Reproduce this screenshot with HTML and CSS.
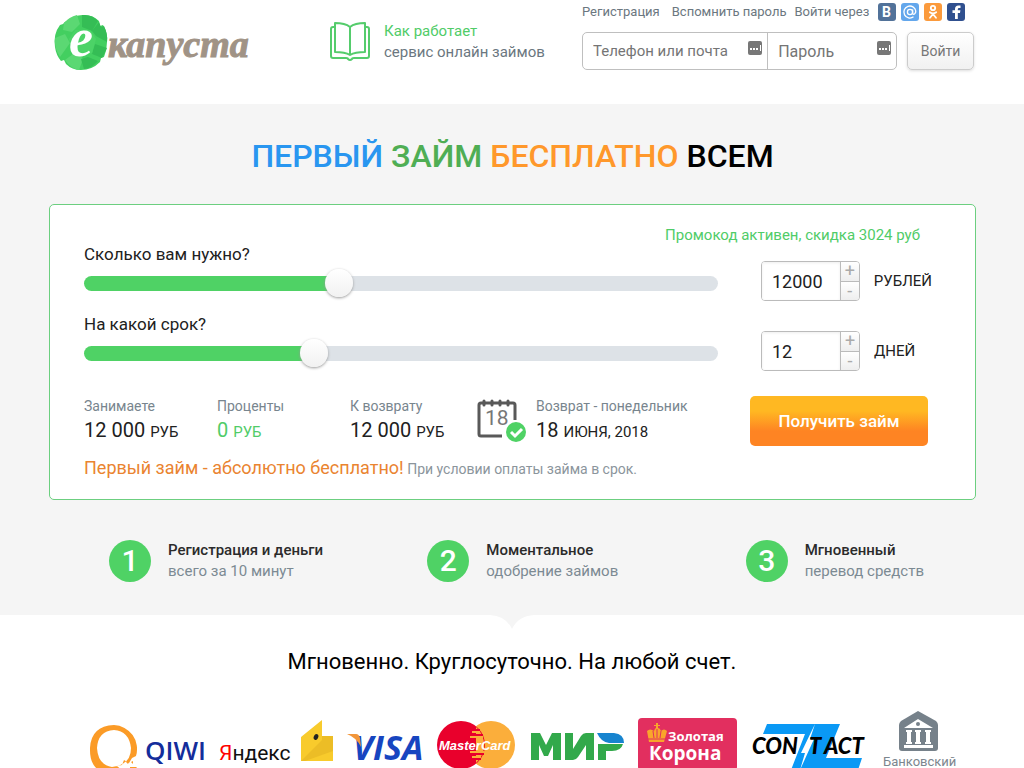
FILE: index.html
```html
<!DOCTYPE html>
<html lang="ru">
<head>
  <meta charset="UTF-8">
  <meta name="viewport" content="width=device-width, initial-scale=1.0">
  <title>еКапуста - первый займ бесплатно</title>
  <link rel="stylesheet" href="styles.css">
</head>
<body>

<header class="header">
  <a class="logo" href="#" aria-label="еКапуста">
    <svg width="200" height="62" viewBox="52 10 200 62">
      <path fill="#43cf60" d="M63 24q2-3 4-3 8-7 18-6 8 0 14 6l1 5 3-1q5 8 4 17 0 8-3 15l-3 1-1 4q-8 8-19 8-9 0-15-6l-2-4-3 1q-5-6-6-14-2-13 5-22z"/>
      <path fill="#5bd873" d="M64 23q5-6 13-8l3 9-8 8-9-2zM55 38l10-4 5 9-10 14q-6-9-5-19zM65 60l12-9 6 8-4 11q-9-2-14-10z"/>
      <path fill="#35bd55" d="M82 15q10-1 16 6l-6 10-10-4zM99 22l2 5 3-1q4 8 3 16l-11-6-4-5zM95 44l12 4-5 10-10-4zM88 57l10 4q-6 7-14 8l-3-10z"/>
      <path fill="#4cd367" d="M75 30l15 0 6 9-4 14-12 4-9-7-2-11z"/>
      <text class="logo-letter" x="69" y="56">е</text>
      <text class="logo-word" x="108" y="57">капуста</text>
    </svg>
  </a>

  <a class="how" href="#">
    <svg width="40" height="40" viewBox="0 0 40 40" fill="none" stroke="#55cc6c" stroke-width="2" stroke-linejoin="round">
      <path d="M5 5H3Q1 5 1 7V34Q1 36 3 36H16Q18 36 18 37Q20 39 22 37Q22 36 24 36H37Q39 36 39 34V7Q39 5 37 5H35"/>
      <path d="M5 1Q15 1 20 5Q25 1 35 1V30Q25 30 20 33Q15 30 5 30ZM20 5V33"/>
    </svg>
    <span class="how-text"><span class="green">Как работает</span><br>сервис онлайн займов</span>
  </a>

  <form class="login">
    <div class="login-links">
      <a class="link-reg" href="#">Регистрация</a>
      <a class="link-pass" href="#">Вспомнить пароль</a>
      <span class="via">Войти через</span>
      <div class="social">
        <a class="vk" href="#" aria-label="ВКонтакте"><svg width="18" height="18" viewBox="0 0 18 18"><text class="soc-letter" x="4" y="14">B</text></svg></a>
        <a class="mail" href="#" aria-label="Mail.ru"><svg width="18" height="18" viewBox="0 0 18 18" fill="none" stroke="#fff" stroke-width="1.3"><circle cx="9" cy="9" r="2.6"/><path d="M11.6 6.4V10Q12 12 13.5 11Q15 9.500 14.800 8A6 6 0 1 0 12.500 13.800"/></svg></a>
        <a class="ok" href="#" aria-label="Одноклассники"><svg width="18" height="18" viewBox="0 0 18 18" fill="none" stroke="#fff" stroke-width="1.8" stroke-linecap="round"><circle cx="9" cy="5" r="2.200"/><path d="M5.800 9.300Q9 11.500 12.200 9.300M9 11L6 14.800M9 11L12 14.800"/></svg></a>
        <a class="fb" href="#" aria-label="Facebook"><svg width="18" height="18" viewBox="0 0 18 18"><path fill="#fff" d="M8 16V10H5.500V7.200H8V6Q8 2.500 11.500 2.500H13.500V5H12Q10.800 5 10.800 6.200V7.200H13.400L13 10H10.800V16Z"/></svg></a>
      </div>
    </div>
    <div class="login-row">
      <div class="fields">
        <label class="field field-phone">
          <input type="text" placeholder="Телефон или почта" aria-label="Телефон или почта">
          <svg width="14" height="14" viewBox="0 0 14 14"><rect width="14" height="14" rx="2" fill="#777"/><path fill="#fff" d="M2 7h2v2H2zM5 7h2v2H5zM8 7h2v2H8zM12 4h1v6h-1z"/></svg>
        </label>
        <label class="field field-pass">
          <input type="password" placeholder="Пароль" aria-label="Пароль">
          <svg width="14" height="14" viewBox="0 0 14 14"><rect width="14" height="14" rx="2" fill="#777"/><path fill="#fff" d="M2 7h2v2H2zM5 7h2v2H5zM8 7h2v2H8zM12 4h1v6h-1z"/></svg>
        </label>
      </div>
      <button class="btn-login" type="button">Войти</button>
    </div>
  </form>
</header>

<main>
  <section class="promo">
    <h1><span class="blue">ПЕРВЫЙ</span> <span class="dark-green">ЗАЙМ</span> <span class="orange">БЕСПЛАТНО</span> ВСЕМ</h1>

    <form class="calc">
      <div class="promocode">Промокод активен, скидка 3024 руб</div>

      <div class="row">
        <div class="range">
          <label for="sum">Сколько вам нужно?</label>
          <input type="range" id="sum" min="100" max="30000" step="100" value="12000" style="--fill: 40%">
        </div>
        <div class="amount">
          <div class="stepper">
            <input type="text" id="sum-value" value="12000" aria-label="Сумма, рублей">
            <div class="step-btns">
              <button type="button" data-for="sum" data-step="100">+</button>
              <button type="button" data-for="sum" data-step="-100">-</button>
            </div>
          </div>
          <span>РУБЛЕЙ</span>
        </div>
      </div>

      <div class="row">
        <div class="range">
          <label for="days">На какой срок?</label>
          <input type="range" id="days" min="7" max="21" value="12" style="--fill: 36%">
        </div>
        <div class="amount">
          <div class="stepper">
            <input type="text" id="days-value" value="12" aria-label="Срок, дней">
            <div class="step-btns">
              <button type="button" data-for="days" data-step="1">+</button>
              <button type="button" data-for="days" data-step="-1">-</button>
            </div>
          </div>
          <span>ДНЕЙ</span>
        </div>
      </div>

      <div class="summary">
        <div class="sum-item"><span>Занимаете</span><p>12 000 <small>РУБ</small></p></div>
        <div class="sum-item"><span>Проценты</span><p class="green">0 <small>РУБ</small></p></div>
        <div class="sum-item"><span>К возврату</span><p>12 000 <small>РУБ</small></p></div>
        <svg class="calendar" width="50" height="46" viewBox="0 0 50 46">
          <path fill="none" stroke="#595959" stroke-width="3" stroke-linejoin="round" d="M25 38H4Q2 38 2 36V7Q2 5 4 5H36Q38 5 38 7V22"/>
          <path stroke="#595959" stroke-width="3" stroke-linecap="round" d="M7 3V7M15 3V7M23 3V7M31 3V7"/>
          <text class="cal-day" x="8" y="27">18</text>
          <circle cx="39" cy="34" r="10" fill="#4fd265"/>
          <path fill="none" stroke="#fff" stroke-width="3" d="M34 34l4 4 7-7"/>
        </svg>
        <div class="sum-item"><span>Возврат - понедельник</span><p>18 <small>ИЮНЯ, 2018</small></p></div>
        <button class="btn-get" type="button">Получить займ</button>
      </div>

      <div class="note"><span>Первый займ - абсолютно бесплатно!</span> При условии оплаты займа в срок.</div>
    </form>

    <div class="steps">
      <div class="step"><div class="num">1</div><p><b>Регистрация и деньги</b><br>всего за 10 минут</p></div>
      <div class="step"><div class="num">2</div><p><b>Моментальное</b><br>одобрение займов</p></div>
      <div class="step"><div class="num">3</div><p><b>Мгновенный</b><br>перевод средств</p></div>
    </div>
  </section>

  <section class="pay">
    <svg class="notch" width="44" height="14" viewBox="0 0 44 14"><path fill="#f5f5f5" d="M0 0H44Q28 1 22 14Q16 1 0 0Z"/></svg>
    <h2>Мгновенно. Круглосуточно. На любой счет.</h2>

    <div class="brands">
      <svg width="116" height="66" viewBox="90 708 116 66" role="img" aria-label="QIWI">
        <path fill="#fb9b27" fill-rule="evenodd" d="M114 725a24 24 0 0 1 22 31l-4 2-3 5-5-3-2 5-5 1 7 6q-35 7-34-24 1-22 24-23zM114 730q-16 1-17 18 1 17 15 19 19-2 19-19-2-17-17-18z"/>
        <path fill="#fb9b27" d="M126 762l2-2 1 2-1 2zM131 762l2-1v3zM130 767h7q-2 4-7 2z"/>
        <text class="qiwi" x="145" y="760">QIWI</text>
      </svg>
      <svg width="113" height="66" viewBox="220 708 113 66" role="img" aria-label="Яндекс">
        <text class="yandex" x="219" y="760"><tspan fill="#f00">Я</tspan>ндекс</text>
        <path fill="#f8cb2c" d="M301 737L322 720V736H333V761H301Z"/>
        <path fill="#dfaf20" d="M322 736H326V747L310 755L322 742ZM326 736L333 736V751L305 761H301Z" opacity=".5"/>
        <ellipse cx="316" cy="737" rx="2.200" ry="3" fill="#222" transform="rotate(25 316 737)"/>
      </svg>
      <svg width="74" height="66" viewBox="350 708 74 66" role="img" aria-label="VISA">
        <text class="visa" x="355" y="760">VISA</text>
        <path fill="#f2963a" d="M349 734H358Q361 734 362 738L363 747Q359 738 349 734Z"/>
      </svg>
      <svg width="80" height="66" viewBox="438 708 80 66" role="img" aria-label="MasterCard">
        <circle cx="493" cy="745" r="24" fill="#fbae3b"/>
        <circle cx="463" cy="745" r="24" fill="#e9002c"/>
        <path fill="#fbae3b" d="M478 727a24 24 0 0 1 0 36z"/>
        <path stroke="#e9002c" stroke-width="2" d="M474 730H482M474 735H485M474 754H486M474 759H483"/>
        <path stroke="#fbae3b" stroke-width="2" d="M474 732H482M472 737H485M472 752H486M474 757H483"/>
        <text class="mc" x="441" y="750">MasterCard</text>
      </svg>
      <svg width="93" height="66" viewBox="530 708 93 66" role="img" aria-label="МИР">
        <g fill="#32a94b">
          <path d="M530 760V733H539L545 745L551 733H560V760H552V745L547 756H543L538 745V760Z"/>
          <path d="M564 733H572V749L580 736Q582 733 585 733H593V760H585V745L577 757Q575 760 572 760H564Z"/>
          <path d="M597 744H622Q620 751 611 751H605V760H597Z"/>
        </g>
        <path fill="#1784cf" d="M596 733H613Q623 734 623 743H608Q600 742 596 733Z"/>
      </svg>
      <svg width="99" height="66" viewBox="635 708 99 66" role="img" aria-label="Золотая Корона">
        <rect x="635" y="718" width="99" height="53" rx="4" fill="#e22f5f"/>
        <path fill="#f9a52b" d="M646 742L644 731Q647 728 651 731Q652 728 653 728V726H651V725H653V723H655V725H657V726H655V728Q657 728 658 731Q661 728 664 731L661 742Z"/>
        <path stroke="#e22f5f" fill="none" d="M650 731L651 738M654 729V738M658 731L657 738M645 739H662"/>
        <text class="zk-1" x="665" y="741">Золотая</text>
        <text class="zk-2" x="646" y="760">Корона</text>
      </svg>
      <svg width="118" height="66" viewBox="750 708 118 66" role="img" aria-label="CONTACT">
        <path fill="#0a99f5" d="M765 724H838L824 758H860L856 770H789L803 734H761Z"/>
        <path fill="#fff" d="M813 724L799 753L803 753L798 770L812 739L808 739Z"/>
        <text class="contact" x="750" y="754">CON</text>
        <text class="contact" x="807" y="754">T</text>
        <text class="contact" x="822" y="754">ACT</text>
      </svg>
      <svg width="70" height="66" viewBox="884 708 70 66" role="img" aria-label="Банковский">
        <path fill="#76818a" d="M918 711L936 721Q938 723 938 725V748Q938 751 935 751H902Q899 751 899 748V725Q899 723 901 721Z"/>
        <path fill="#fff" d="M918 719L933 728H904ZM906 730H912V732H911V742H912V744H906V742H907V732H906ZM915 730H921V732H920V742H921V744H915V742H916V732H915ZM925 730H931V732H930V742H931V744H925V742H926V732H925ZM904 745H933V748H904Z"/>
        <circle cx="918" cy="724" r="2" fill="#76818a"/>
        <text class="bank" x="883" y="766">Банковский</text>
      </svg>
    </div>
  </section>
</main>

<script>
  document.querySelectorAll('.range input').forEach(range => {
    const value = document.getElementById(range.id + '-value');

    range.addEventListener('input', () => {
      value.value = range.value;
      const part = (range.value - range.min) / (range.max - range.min);
      range.style.setProperty('--fill', Math.round(part * 100) + '%');
    });

    value.addEventListener('change', () => {
      range.value = value.value;
      range.dispatchEvent(new Event('input'));
    });
  });

  document.querySelectorAll('.step-btns button').forEach(btn => {
    btn.addEventListener('click', () => {
      const range = document.getElementById(btn.dataset.for);
      range.value = Number(range.value) + Number(btn.dataset.step);
      range.dispatchEvent(new Event('input'));
    });
  });
</script>
</body>
</html>
```
FILE: styles.css
```css
* { box-sizing: border-box; }
body { margin: 0; background: #fff; color: #212121; font-family: Roboto, "Liberation Sans", sans-serif; font-size: 15px; line-height: 20px; }
h1, h2, p { margin: 0; }
a { color: inherit; text-decoration: none; }
svg { display: block; flex: none; }
input, button { font-family: inherit; margin: 0; }

.green { color: #50cc68; }
.blue { color: #2996f0; }
.dark-green { color: #4fae54; }
.orange { color: #ff982b; }

/* header */
.header { display: grid; grid-template-columns: 278px 252px 1fr; max-width: 1024px; margin: 0 auto; padding: 0 50px 32px 52px; }
.logo { padding-top: 10px; }
.logo-letter { font: italic bold 54px "Liberation Serif", serif; fill: #fff; }
.logo-word { font: italic bold 38px "Liberation Serif", serif; fill: #a09386; stroke: #a09386; }
.how { display: flex; gap: 14px; padding-top: 21px; color: #6b7780; }
.how svg { margin-top: 1px; }
.how-text { line-height: 21px; }
.login-links { display: flex; align-items: center; height: 24px; font-size: 13px; color: #6b7780; white-space: nowrap; }
.link-reg { margin-right: 12px; }
.link-pass { margin-right: 8px; }
.via { margin-right: 9px; }
.social { display: flex; gap: 5px; }
.social a { border-radius: 3px; }
.vk { background: #527299; }
.mail { background: #63a7ec; }
.ok { background: #fb9a3c; }
.fb { background: #30508f; }
.soc-letter { font: bold 14px Roboto, sans-serif; fill: #fff; }
.login-row { display: flex; gap: 10px; margin-top: 8px; }
.fields { display: flex; flex: 1; height: 38px; border: 1px solid #bfbfbf; border-radius: 5px; }
.field { display: flex; padding: 8px 5px 0 10px; }
.field input { flex: 1; width: 0; height: 20px; padding: 0; border: 0; outline: 0; background: none; font-size: 15px; color: #333; }
.field-pass input { font-size: 16px; }
.field input::placeholder { color: #757575; opacity: 1; }
.field-phone { flex: 3; border-right: 1px solid #bfbfbf; }
.field-pass { flex: 2; }
.btn-login { width: 67px; border: 1px solid #ccc; border-radius: 5px; background: linear-gradient(#fff, #f1f1f1); box-shadow: 0 1px 3px #ddd; color: #777; font-size: 14px; }

/* calculator */
.promo { padding: 32px 48px 33px 49px; background: #f5f5f5; }
h1 { color: #000; font-size: 32px; line-height: 40px; font-weight: 500; text-align: center; }
.calc { max-width: 1100px; margin: 28px auto 0; padding: 20px 43px 19px 34px; border: 1px solid #6ccf80; border-radius: 5px; background: #fff; }
.promocode { padding-right: 12px; color: #50cc68; text-align: right; }
.row { display: flex; align-items: flex-end; gap: 43px; }
.row + .row { margin-top: 14px; }
.range { flex: 1; height: 56px; font-size: 17px; line-height: 18px; }
.range label { display: block; }
.range input { display: block; width: 100%; height: 15px; margin-top: 13px; background: none; outline: 0; -webkit-appearance: none; appearance: none; }
.range input::-webkit-slider-runnable-track { height: 15px; border-radius: 8px; background: linear-gradient(to right, #4fd265 var(--fill), #dde2e7 var(--fill)); }
.range input::-webkit-slider-thumb { -webkit-appearance: none; width: 28px; height: 28px; margin-top: -7px; border-radius: 50%; background: linear-gradient(#fff, #f1f1f1); box-shadow: 0 1px 3px #999; }
.amount { display: flex; align-items: center; gap: 14px; width: 171px; line-height: 22px; }
.stepper { display: flex; width: 99px; height: 40px; border: 1px solid #bbb; border-radius: 4px; overflow: hidden; }
.stepper input { flex: 1; width: 0; padding: 0 0 0 10px; border: 0; outline: 0; box-shadow: inset 0 1px 3px #eee; color: #212121; font-size: 18px; }
.step-btns { display: flex; flex-direction: column; width: 19px; border-left: 1px solid #bbb; }
.step-btns button { flex: 1; padding: 0; border: 0; background: linear-gradient(#fff, #eee); color: #aaa; font-size: 18px; line-height: 16px; }
.step-btns button + button { border-top: 1px solid #bbb; }

.summary { display: grid; grid-template-columns: 133px 133px 127px 59px 1fr 178px; margin: 25px 4px 0 0; }
.sum-item span { color: #78858e; font-size: 14px; }
.sum-item p { font-size: 20px; line-height: 28px; }
.sum-item small { font-size: 15px; }
.calendar { margin-top: 2px; }
.cal-day { font: 21px Roboto, sans-serif; fill: #777; }
.btn-get { height: 50px; border: 0; border-radius: 5px; background: linear-gradient(#ffb822 30%, #fe8423 70%); color: #fff; font-size: 17px; font-weight: 500; }
.note { margin-top: 11px; color: #8b959c; font-size: 14px; line-height: 22px; }
.note span { color: #ea8430; font-size: 18px; }

.steps { display: grid; grid-template-columns: 1fr 1fr auto; max-width: 1100px; margin: 40px auto 0; padding: 0 52px 0 60px; }
.step { display: flex; gap: 17px; }
.step p { color: #7c8a93; line-height: 21px; }
.step b { color: #2b2b2b; font-weight: 500; }
.num { width: 42px; height: 42px; border-radius: 50%; background: #4fd265; color: #fff; font-size: 30px; line-height: 42px; font-weight: 500; text-align: center; }

/* payment systems */
.notch { margin: 0 auto; }
h2 { margin-top: 19px; color: #000; font-size: 22px; line-height: 28px; font-weight: 400; text-align: center; }
.brands { display: flex; justify-content: space-between; max-width: 1024px; margin: 32px auto 0; padding: 0 70px 0 90px; }
.brands svg { overflow: visible; }
.qiwi { font: 600 26px "Open Sans", sans-serif; fill: #142d9b; }
.yandex { font: 21px Roboto, sans-serif; fill: #111; }
.visa { font: italic bold 34px "Open Sans", sans-serif; fill: #1745c0; }
.mc { font: italic bold 13px "Liberation Sans", sans-serif; fill: #fff; }
.zk-1 { font: bold 13px "Open Sans", sans-serif; fill: #fff; }
.zk-2 { font: bold 19px "Open Sans", sans-serif; fill: #fff; }
.contact { font: italic 900 22px Lato, sans-serif; fill: #000; }
.bank { font: 13px Roboto, sans-serif; fill: #7c868e; }
```
